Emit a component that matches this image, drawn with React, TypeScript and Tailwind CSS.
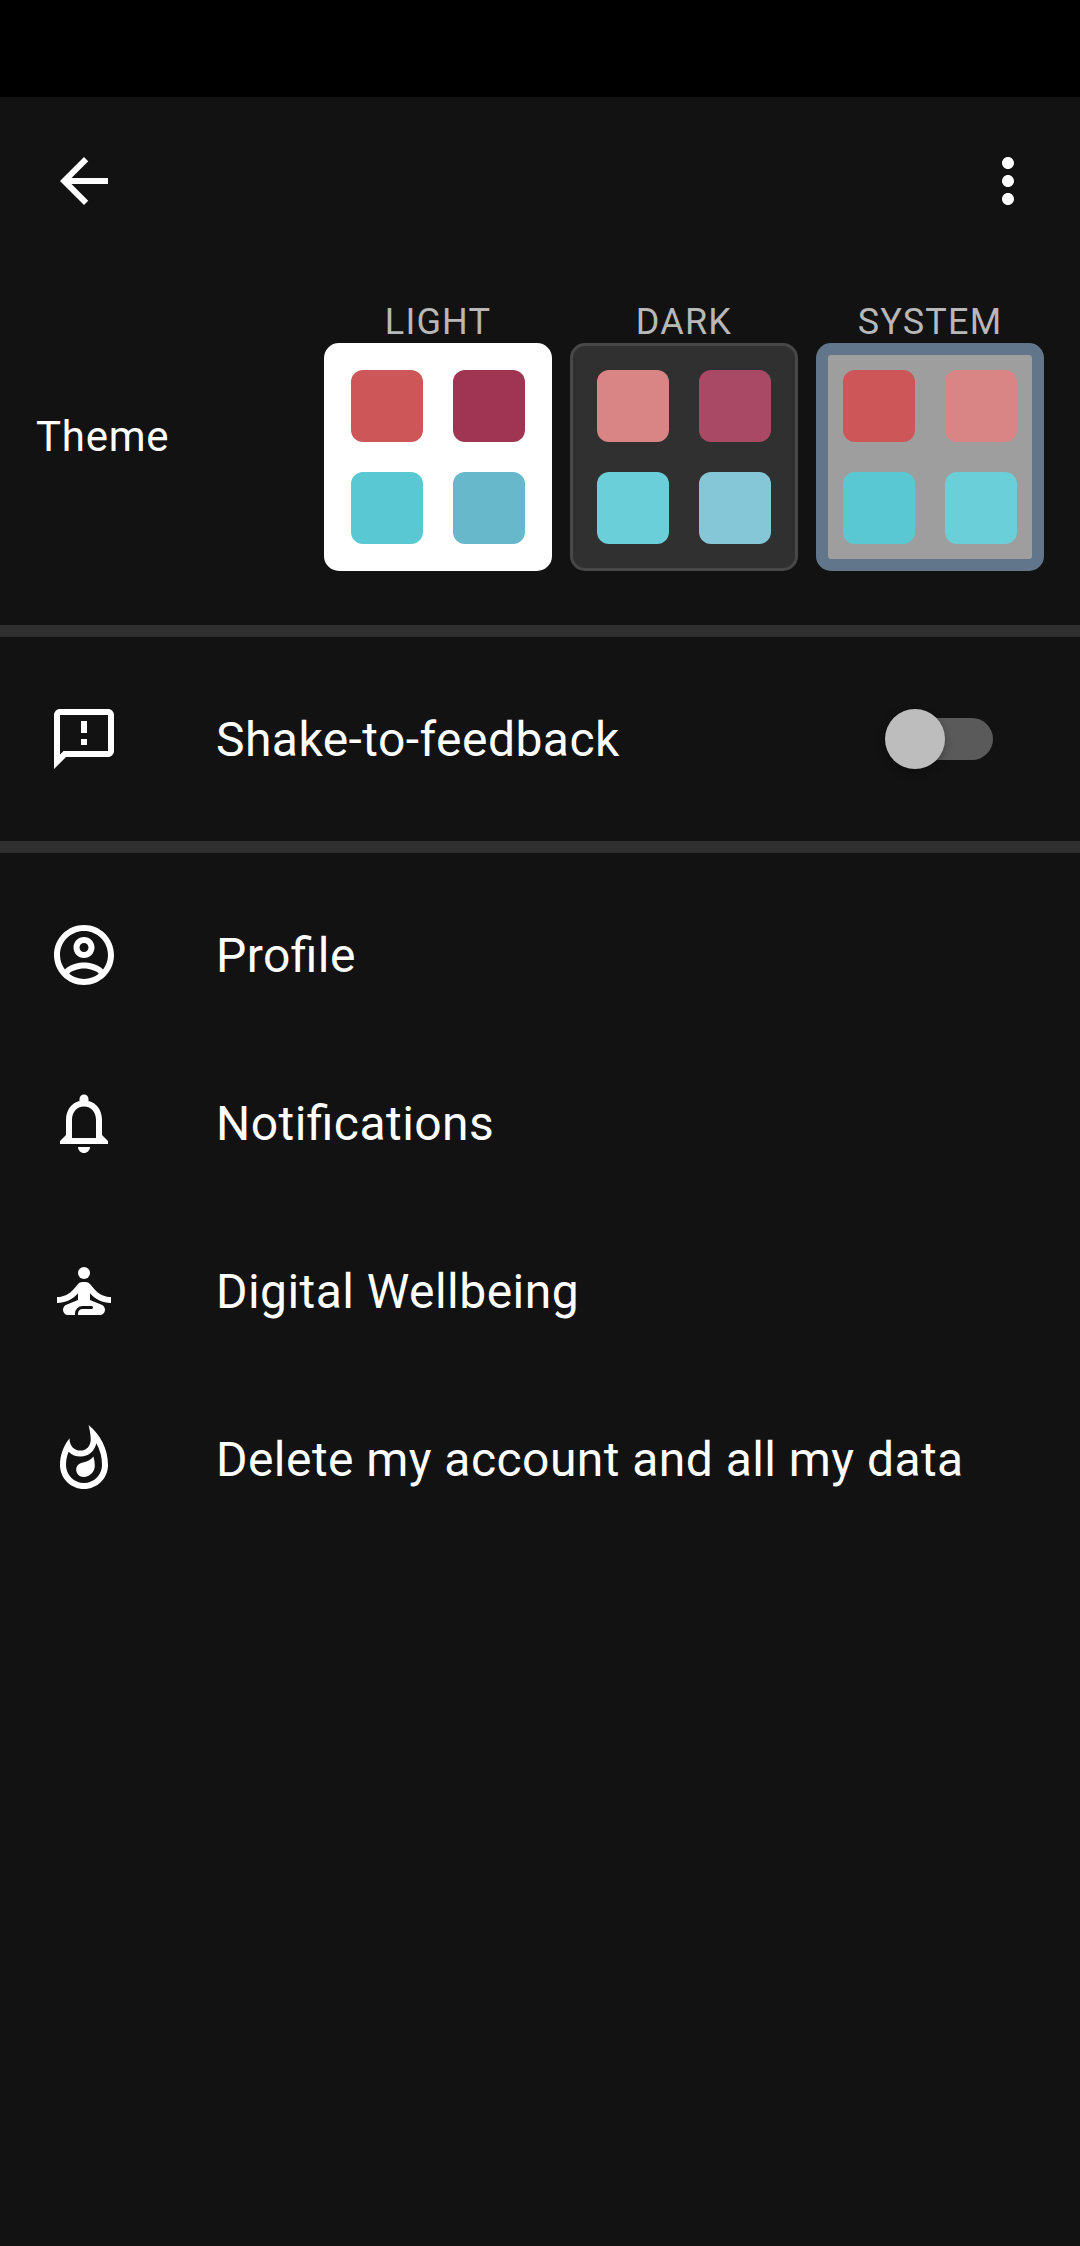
import type { ComponentType, ReactNode } from "react";
import {
  MdArrowBack,
  MdMoreVert,
  MdNotificationsNone,
  MdOutlineSmsFailed,
  MdOutlineWhatshot,
  MdSelfImprovement,
} from "react-icons/md";

type IconComponent = ComponentType<{ className?: string }>;
type Theme = { label: string; card: string; swatches: string[] };

function AccountIcon({ className }: { className?: string }) {
  return (
    <svg viewBox="0 0 24 24" fill="currentColor" className={className}>
      <path d="M12 2C6.48 2 2 6.48 2 12s4.48 10 10 10 10-4.48 10-10S17.52 2 12 2zM7.07 18.28c.43-.9 3.05-1.78 4.93-1.78s4.51.88 4.93 1.78C15.57 19.36 13.86 20 12 20s-3.57-.64-4.93-1.72zm11.29-1.45c-1.43-1.74-4.9-2.33-6.36-2.33s-4.93.59-6.36 2.33C4.62 15.49 4 13.82 4 12c0-4.41 3.59-8 8-8s8 3.59 8 8c0 1.82-.62 3.49-1.64 4.83zM12 6c-1.94 0-3.5 1.56-3.5 3.5S10.06 13 12 13s3.5-1.56 3.5-3.5S13.94 6 12 6zm0 5c-.83 0-1.5-.67-1.5-1.5S11.17 8 12 8s1.5.67 1.5 1.5S12.83 11 12 11z" />
    </svg>
  );
}

const themes: Theme[] = [
  {
    label: "LIGHT",
    card: "bg-white p-[27px]",
    swatches: ["bg-[#cc5658]", "bg-[#a03553]", "bg-[#59c8d3]", "bg-[#68b8cc]"],
  },
  {
    label: "DARK",
    card: "border-[3px] border-[#484848] bg-[#303030] p-6",
    swatches: ["bg-[#d98585]", "bg-[#aa4965]", "bg-[#6acfd9]", "bg-[#85c6d7]"],
  },
  {
    label: "SYSTEM",
    card: "border-[12px] border-[#62768b] bg-[#9e9e9e] p-[15px]",
    swatches: ["bg-[#cc5658]", "bg-[#d98585]", "bg-[#59c8d3]", "bg-[#6acfd9]"],
  },
];

const items: { label: string; icon: IconComponent }[] = [
  { label: "Profile", icon: AccountIcon },
  { label: "Notifications", icon: MdNotificationsNone },
  { label: "Digital Wellbeing", icon: MdSelfImprovement },
  { label: "Delete my account and all my data", icon: MdOutlineWhatshot },
];

function ThemeOption({ label, card, swatches }: Theme) {
  return (
    <button className="flex flex-col items-center">
      <span className="h-[42px] text-[36px] leading-[42px] tracking-[1.2px] text-[#b8b8b8]">{label}</span>
      <span className={`grid size-[228px] grid-cols-2 gap-[30px] rounded-[15px] ${card}`}>
        {swatches.map((color) => (
          <span key={color} className={`size-[72px] rounded-xl ${color}`} />
        ))}
      </span>
    </button>
  );
}

function Row({ label, icon: Icon, children }: { label: string; icon: IconComponent; children?: ReactNode }) {
  return (
    <div className="flex h-[168px] items-center pr-[84px] pl-12">
      <Icon className="size-[72px] shrink-0" />
      <span className="ml-24 flex-1 pt-0.5 text-[48px] leading-[56px] tracking-[0.45px] whitespace-nowrap [font-feature-settings:'liga']">
        {label}
      </span>
      {children}
    </div>
  );
}

function Switch() {
  return (
    <button
      role="switch"
      aria-checked="false"
      aria-label="Shake-to-feedback"
      className="relative flex h-[60px] w-[111px] items-center"
    >
      <span className="mr-[3px] ml-1.5 h-[42px] w-[102px] rounded-full bg-[#5a5a5a]" />
      <span className="absolute top-0 left-0 size-[60px] rounded-full bg-[#bdbdbd] shadow-[0_3px_9px_rgba(0,0,0,0.3)]" />
    </button>
  );
}

export default function App() {
  return (
    <div className="flex min-h-[2246px] w-[1080px] flex-col bg-[#121212] font-['Roboto',sans-serif] text-white">
      <div className="h-[97px] bg-black" />
      <header className="flex h-[168px] items-center justify-between pr-9 pl-12">
        <MdArrowBack className="size-[72px]" />
        <MdMoreVert className="size-[72px]" />
      </header>
      <section className="flex items-center justify-between px-9 pt-9 pb-[54px]">
        <h2 className="text-[42px] leading-[49px] tracking-[0.75px]">Theme</h2>
        <div className="flex gap-[18px]">
          {themes.map((t) => (
            <ThemeOption key={t.label} {...t} />
          ))}
        </div>
      </section>
      <div className="h-3 bg-[#2f2f2f]" />
      <section className="py-[18px]">
        <Row label="Shake-to-feedback" icon={MdOutlineSmsFailed}>
          <Switch />
        </Row>
      </section>
      <div className="h-3 bg-[#2f2f2f]" />
      <nav className="py-[18px]">
        {items.map((item) => (
          <Row key={item.label} {...item} />
        ))}
      </nav>
    </div>
  );
}
